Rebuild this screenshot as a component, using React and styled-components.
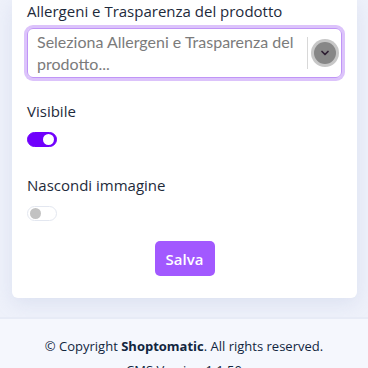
import styled, { createGlobalStyle } from 'styled-components';

const GlobalStyle = createGlobalStyle`
  html, body {
    margin: 0;
    padding: 0;
    background: #eef1fa;
    font-family: 'Open Sans', 'Liberation Sans', sans-serif;
  }
`;

const Page = styled.div`
  width: 368px;
  min-height: 368px;
  display: flex;
  flex-direction: column;
`;

const Content = styled.div`
  padding: 0 11px 19px 12px;
`;

const Card = styled.div`
  background: #fff;
  border-radius: 0 0 6px 6px;
  box-shadow: 0 6px 18px rgba(160, 175, 215, 0.22);
  padding: 0 12px 22px 12px;
  display: flex;
  flex-direction: column;
`;

const Field = styled.div`
  display: flex;
  flex-direction: column;
  margin-bottom: ${(p) => p.$gap || 0}px;
`;

const Label = styled.label`
  font-size: 15px;
  line-height: 22px;
  color: #1e2a3b;
  margin: 0 0 0 3px;
`;

const Select = styled.div`
  display: flex;
  align-items: center;
  border: 1px solid #c095f6;
  border-radius: 6px;
  box-shadow: 0 0 0 3px #dcc3fb;
  margin: 6px 3px 0 3px;
  padding: 2px 5px 3px 9px;
`;

const Placeholder = styled.div`
  flex: 1;
  font-family: Lato, 'Open Sans', sans-serif;
  font-size: 16px;
  line-height: 21.7px;
  color: #7b7b7b;
`;

const Divider = styled.div`
  width: 1px;
  align-self: stretch;
  margin: 6px 0 5px 0;
  background: #d8d8d8;
`;

const Caret = styled.div`
  width: 22px;
  height: 22px;
  border-radius: 50%;
  background: #878787;
  box-shadow: 0 0 0 3px rgba(130, 130, 130, 0.45);
  display: flex;
  align-items: center;
  justify-content: center;
  margin: 0 0 0 6px;
`;

const Toggle = styled.div`
  width: 30px;
  height: 15px;
  box-sizing: border-box;
  border-radius: 8px;
  margin: 10px 0 0 3px;
  display: flex;
  align-items: center;
  padding: 0 2px;
  justify-content: ${(p) => (p.$on ? 'flex-end' : 'flex-start')};
  background: ${(p) => (p.$on ? '#7000fc' : '#fff')};
  border: 1px solid ${(p) => (p.$on ? '#7000fc' : '#e3e7f0')};
`;

const Knob = styled.span`
  width: 11px;
  height: 11px;
  border-radius: 50%;
  background: ${(p) => (p.$on ? '#fff' : '#c2c2c2')};
`;

const Actions = styled.div`
  display: flex;
  justify-content: center;
`;

const SaveButton = styled.button`
  font-family: inherit;
  font-size: 15px;
  font-weight: 600;
  color: #fff;
  background: #a259ff;
  border: none;
  border-radius: 5px;
  width: 60px;
  height: 35px;
  padding: 0;
`;

const Footer = styled.footer`
  border-top: 2px solid #e7ebf6;
  background: #f5f7fd;
  flex: 1;
  padding: 15px 0 0;
  text-align: center;
  font-size: 13px;
  line-height: 24px;
  color: #12263f;
`;

const App = () => (
  <Page>
    <GlobalStyle />
    <Content>
      <Card>
        <Field $gap={22}>
          <Label>Allergeni e Trasparenza del prodotto</Label>
          <Select>
            <Placeholder>Seleziona Allergeni e Trasparenza del prodotto...</Placeholder>
            <Divider />
            <Caret>
              <svg width="12" height="12" viewBox="0 0 24 24" fill="none" stroke="#2e1f33" strokeWidth="3.5" strokeLinecap="round" strokeLinejoin="round">
                <path d="M6 9l6 6 6-6" />
              </svg>
            </Caret>
          </Select>
        </Field>
        <Field $gap={27}>
          <Label>Visibile</Label>
          <Toggle $on>
            <Knob $on />
          </Toggle>
        </Field>
        <Field $gap={20}>
          <Label>Nascondi immagine</Label>
          <Toggle>
            <Knob />
          </Toggle>
        </Field>
        <Actions>
          <SaveButton>Salva</SaveButton>
        </Actions>
      </Card>
    </Content>
    <Footer>
      <div>
        © Copyright <b>Shoptomatic</b>. All rights reserved.
      </div>
      <div>CMS Version 1.1.50</div>
    </Footer>
  </Page>
);

export default App;
